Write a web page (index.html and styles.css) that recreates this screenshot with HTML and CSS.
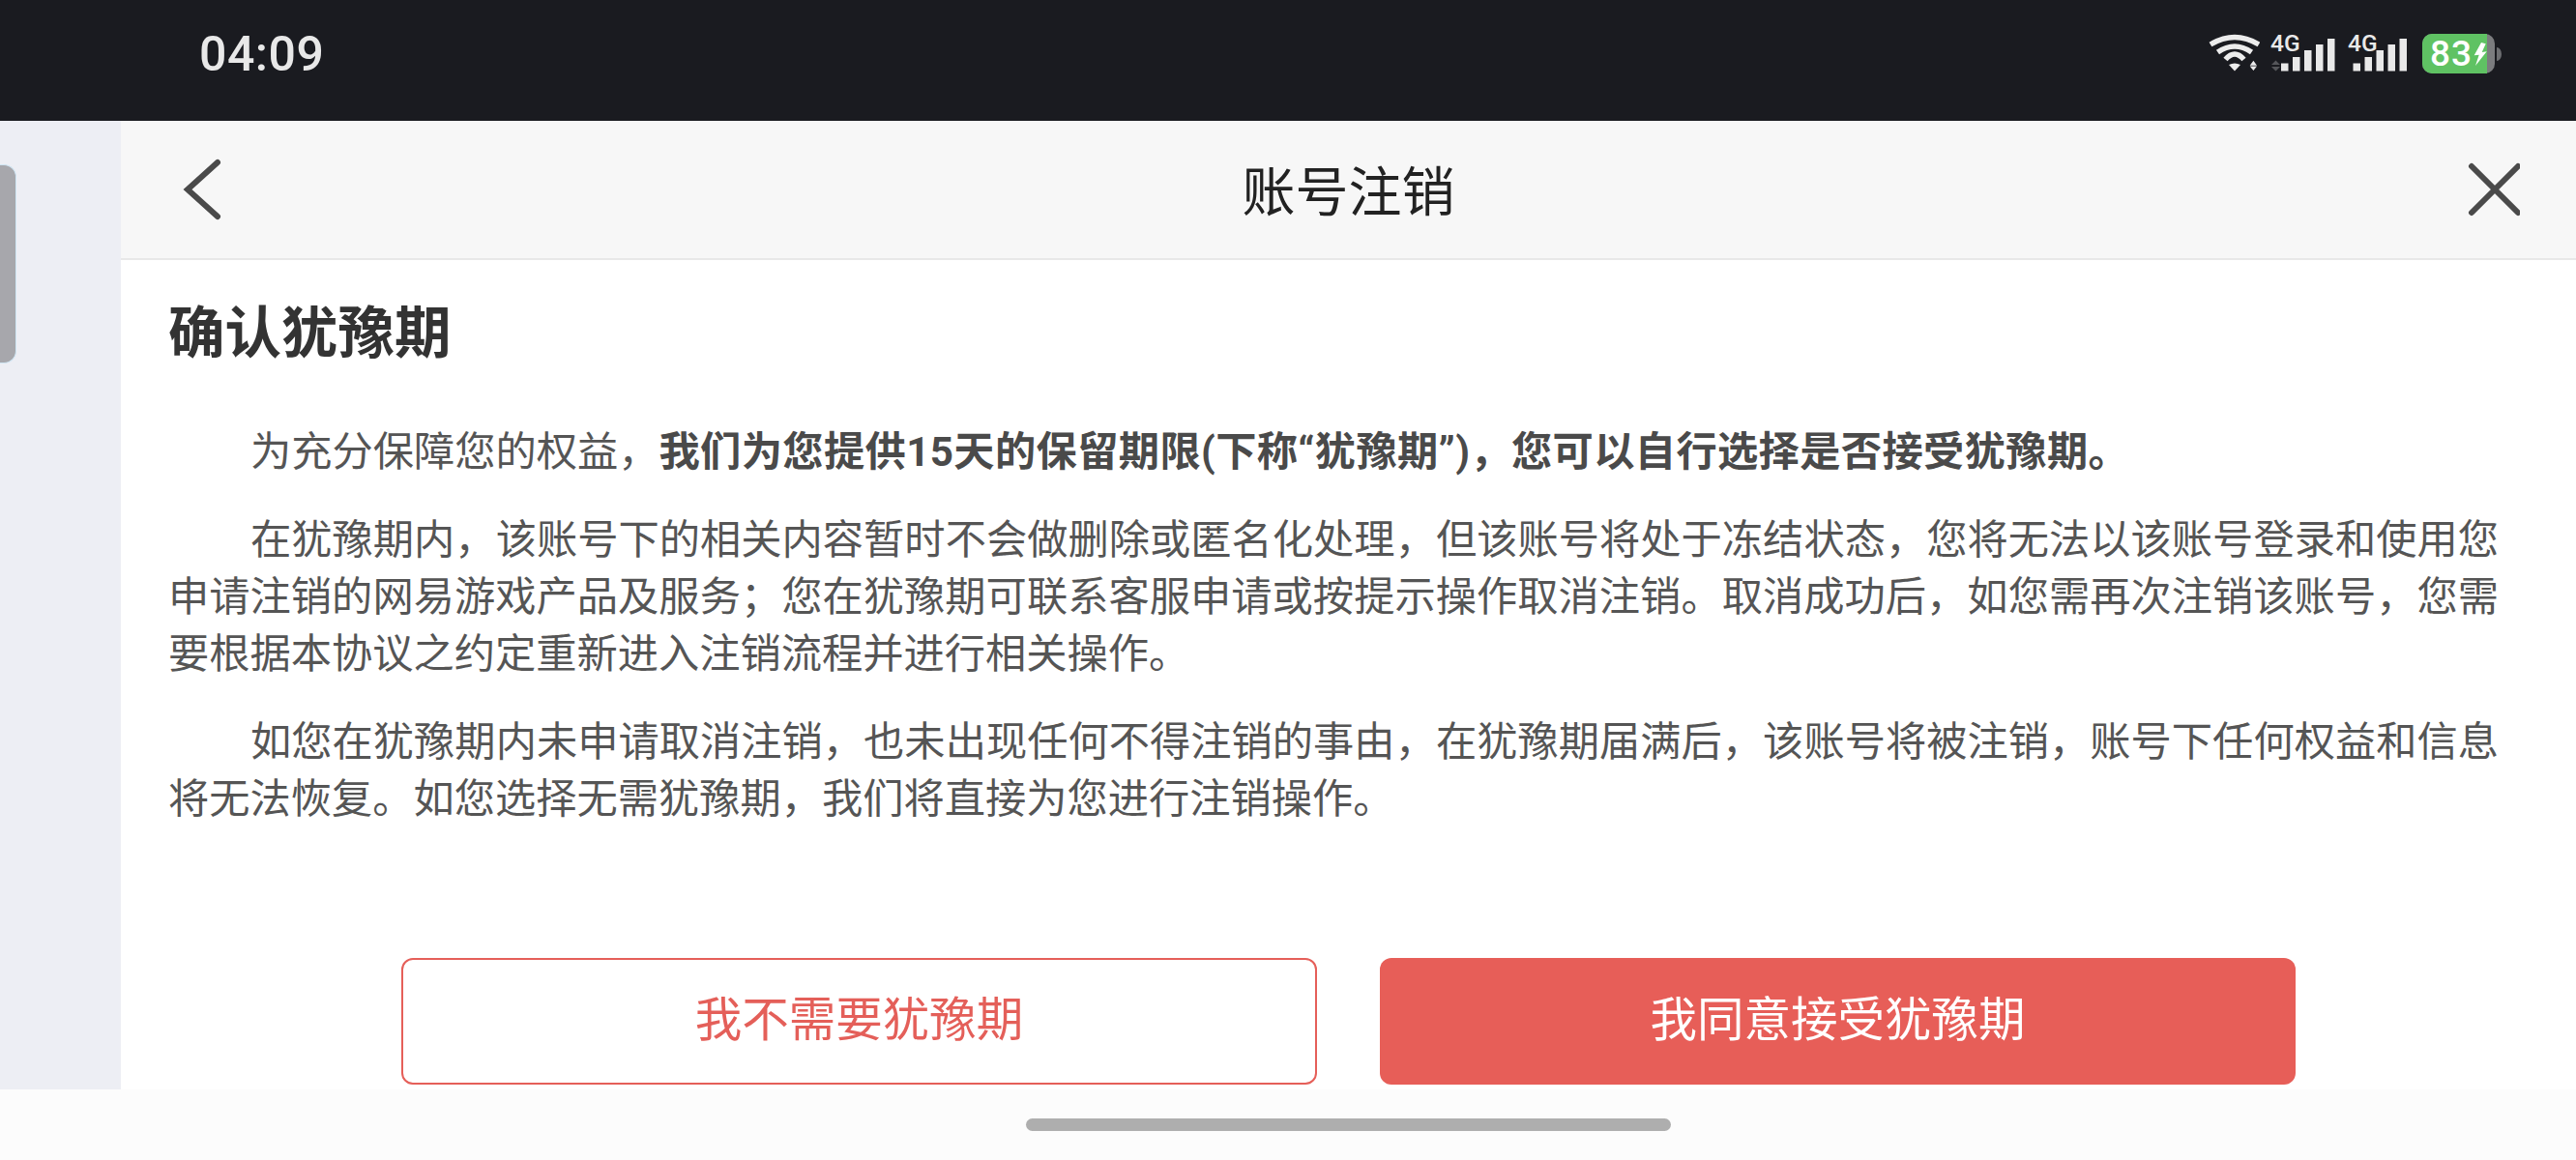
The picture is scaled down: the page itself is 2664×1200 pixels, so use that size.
FILE: index.html
```html
<!DOCTYPE html>
<html lang="zh-CN">
<head>
<meta charset="utf-8">
<title>账号注销</title>
<link rel="stylesheet" href="styles.css">
</head>
<body>
<div class="phone">
  <header class="statusbar">
    <span class="time">04:09</span>
    <div class="status-icons">
      <svg class="ic-wifi" width="53" height="50" viewBox="0 -6 53 50">
        <path d="M2 12 Q27 -3 52 12" class="wifi-arc"/>
        <path d="M9.500 20 Q27 8 44.500 20" class="wifi-arc"/>
        <path d="M17.500 27.500 Q27 16.500 36.500 27.500" class="wifi-arc"/>
        <path d="M21 33 Q27 30 33 33 L27 39.500 Z" class="wifi-fill"/>
        <path d="M42.700 33.700 L46.400 28.700 L50 33.700 Z M42.700 34.500 L50 34.500 L46.400 39 Z" class="wifi-fill"/>
      </svg>
      <svg class="ic-signal" width="68" height="50" viewBox="0 -6 68 50">
        <text x="0" y="19" class="net">4G</text>
        <path d="M1 33 L5.500 28.500 L10 33 Z M1 35 L10 35 L5.500 39.500 Z" class="dim"/>
        <rect x="11" y="31.500" width="7.500" height="8" class="bar"/>
        <rect x="23" y="25" width="7.500" height="14.500" class="bar"/>
        <rect x="35" y="18" width="7.500" height="21.500" class="bar"/>
        <rect x="47" y="12" width="7.500" height="27.500" class="bar"/>
        <rect x="59" y="6" width="7.500" height="33.500" class="bar"/>
      </svg>
      <svg class="ic-signal2" width="62" height="50" viewBox="0 -6 62 50">
        <text x="0" y="19" class="net">4G</text>
        <rect x="5.500" y="31.500" width="7.500" height="8" class="bar"/>
        <rect x="17.500" y="25" width="7.500" height="14.500" class="bar"/>
        <rect x="29.500" y="18" width="7.500" height="21.500" class="bar"/>
        <rect x="41.500" y="12" width="7.500" height="27.500" class="bar"/>
        <rect x="53.500" y="6" width="7.500" height="33.500" class="bar"/>
      </svg>
      <svg class="ic-battery" width="82" height="50" viewBox="0 -6 82 50">
        <rect x="0" y="1" width="75" height="41" rx="10" class="batt-back"/>
        <path d="M10 1 H67 V42 H10 A10 10 0 0 1 0 32 V11 A10 10 0 0 1 10 1 Z" class="batt-fill"/>
        <path d="M77 15 A5 7 0 0 1 77 29 Z" class="batt-nub"/>
        <text x="8" y="34.300" class="batt-text">83</text>
        <path d="M61 10 L53.700 23.300 L58.700 22.700 L55 34 L66.700 19.300 L61.700 20 L65.700 11.300 Z" class="batt-bolt"/>
      </svg>
    </div>
  </header>

  <div class="main">
    <aside class="rail"><div class="handle"></div></aside>
    <section class="panel">
      <div class="navbar">
        <button class="nav-btn nav-left" aria-label="返回">
          <svg width="60" height="72" viewBox="0 0 60 72"><path d="M42 8 L11 36 L42 64" class="nav-stroke"/></svg>
        </button>
        <h1 class="nav-title">账号注销</h1>
        <button class="nav-btn nav-right" aria-label="关闭">
          <svg width="60" height="72" viewBox="0 0 60 72"><path d="M10 12 L58 60 M58 12 L10 60" class="nav-stroke"/></svg>
        </button>
      </div>
      <div class="content">
        <h2 class="heading">确认犹豫期</h2>
        <p class="para">为充分保障您的权益&#65292;<strong>我们为您提供15天的保留期限(下称“犹豫期”)&#65292;您可以自行选择是否接受犹豫期。</strong></p>
        <p class="para">在犹豫期内&#65292;该账号下的相关内容暂时不会做删除或匿名化处理&#65292;但该账号将处于冻结状态&#65292;您将无法以该账号登录和使用您申请注销的网易游戏产品及服务&#65307;您在犹豫期可联系客服申请或按提示操作取消注销。取消成功后&#65292;如您需再次注销该账号&#65292;您需要根据本协议之约定重新进入注销流程并进行相关操作。</p>
        <p class="para">如您在犹豫期内未申请取消注销&#65292;也未出现任何不得注销的事由&#65292;在犹豫期届满后&#65292;该账号将被注销&#65292;账号下任何权益和信息将无法恢复。如您选择无需犹豫期&#65292;我们将直接为您进行注销操作。</p>
      </div>
      <div class="actions">
        <button class="btn btn-outline">我不需要犹豫期</button>
        <button class="btn btn-solid">我同意接受犹豫期</button>
      </div>
    </section>
  </div>

  <footer class="homebar"><div class="home-indicator"></div></footer>
</div>
</body>
</html>
```

FILE: styles.css
```css
* { box-sizing: border-box; }
html, body { margin: 0; padding: 0; }
body {
  font-family: "Noto Sans CJK SC", "Liberation Sans", sans-serif;
  background: #fff;
}
.phone {
  width: 2664px;
  height: 1200px;
  display: flex;
  flex-direction: column;
  overflow: hidden;
}
.statusbar {
  height: 125px;
  flex: none;
  background: #1a1b20;
  display: flex;
  justify-content: space-between;
  align-items: flex-start;
  padding: 28px 77px 0 206px;
}
.time {
  font-family: Roboto, sans-serif;
  font-weight: 500;
  font-size: 50px;
  line-height: 56px;
  color: #e8e8e8;
  letter-spacing: 0.5px;
}
.status-icons { display: flex; align-items: flex-start; }
.status-icons svg { display: block; }
.ic-signal { margin-left: 11px; }
.ic-signal2 { margin-left: 12px; }
.ic-battery { margin-left: 15px; }
.wifi-arc { fill: none; stroke: #ececec; stroke-width: 5.5; }
.wifi-fill { fill: #ececec; }
.bar { fill: #e9e9e9; }
.dim { fill: #55565a; }
.net {
  font-family: Roboto, sans-serif;
  font-weight: 500;
  font-size: 24.5px;
  fill: #e9e9e9;
}
.batt-back { fill: #7b7c7e; }
.batt-fill { fill: #5fc263; }
.batt-nub { fill: #6d6e71; }
.batt-text {
  font-family: Roboto, sans-serif;
  font-weight: 500;
  font-size: 37px;
  letter-spacing: 1px;
  fill: #fff;
}
.batt-bolt { fill: #fff; }

.main { flex: 1; display: flex; min-height: 0; }
.rail { width: 125px; flex: none; background: #edeef4; padding-top: 45px; }
.handle {
  width: 17px;
  height: 206px;
  background: #a7a7ac;
  border: 1px solid #cfe5f3;
  border-left: 0;
  border-radius: 0 13px 13px 0;
}
.panel { flex: 1; display: flex; flex-direction: column; background: #fff; min-width: 0; }
.navbar {
  height: 144px;
  flex: none;
  background: #f7f7f7;
  border-bottom: 2px solid #e8e8e8;
  display: grid;
  grid-template-columns: 1fr auto 1fr;
  align-items: center;
  padding: 0 58px 4px;
}
.nav-btn { border: 0; padding: 0; margin-top: 4px; background: none; display: flex; }
.nav-right { justify-self: end; }
.nav-stroke { fill: none; stroke: #4a4a4a; stroke-width: 6; stroke-linecap: round; stroke-linejoin: miter; }
.nav-title { margin: 0; font-size: 55px; font-weight: 400; line-height: 70px; color: #222; }
.content { flex: 1; padding: 41px 80px 0 49px; }
.heading { margin: 0 0 68px; font-size: 58.5px; line-height: 60px; font-weight: 700; color: #333; }
.para {
  margin: 0 0 32px;
  font-family: Roboto, "Noto Sans CJK SC", sans-serif;
  font-size: 42.25px;
  line-height: 59px;
  color: #555;
  text-indent: 85px;
  text-align: justify;
}
.para strong { font-weight: 700; color: #4a4a4a; letter-spacing: 0.36px; }
.actions {
  flex: none;
  display: flex;
  justify-content: center;
  gap: 65px;
  padding-bottom: 5px;
}
.btn {
  width: 947px;
  height: 131px;
  border-radius: 12px;
  font-family: inherit;
  font-size: 48.5px;
  padding: 0 0 12px;
}
.btn-outline { background: #fff; color: #e45f59; border: 2px solid #e55f59; }
.btn-solid { background: #e75e58; color: #fff; border: 0; }
.homebar {
  height: 73px;
  flex: none;
  background: #fcfcfc;
  display: flex;
  justify-content: center;
  padding-left: 125px;
  padding-top: 30px;
}
.home-indicator { width: 667px; height: 13px; border-radius: 7px; background: #aeaeae; }
```
